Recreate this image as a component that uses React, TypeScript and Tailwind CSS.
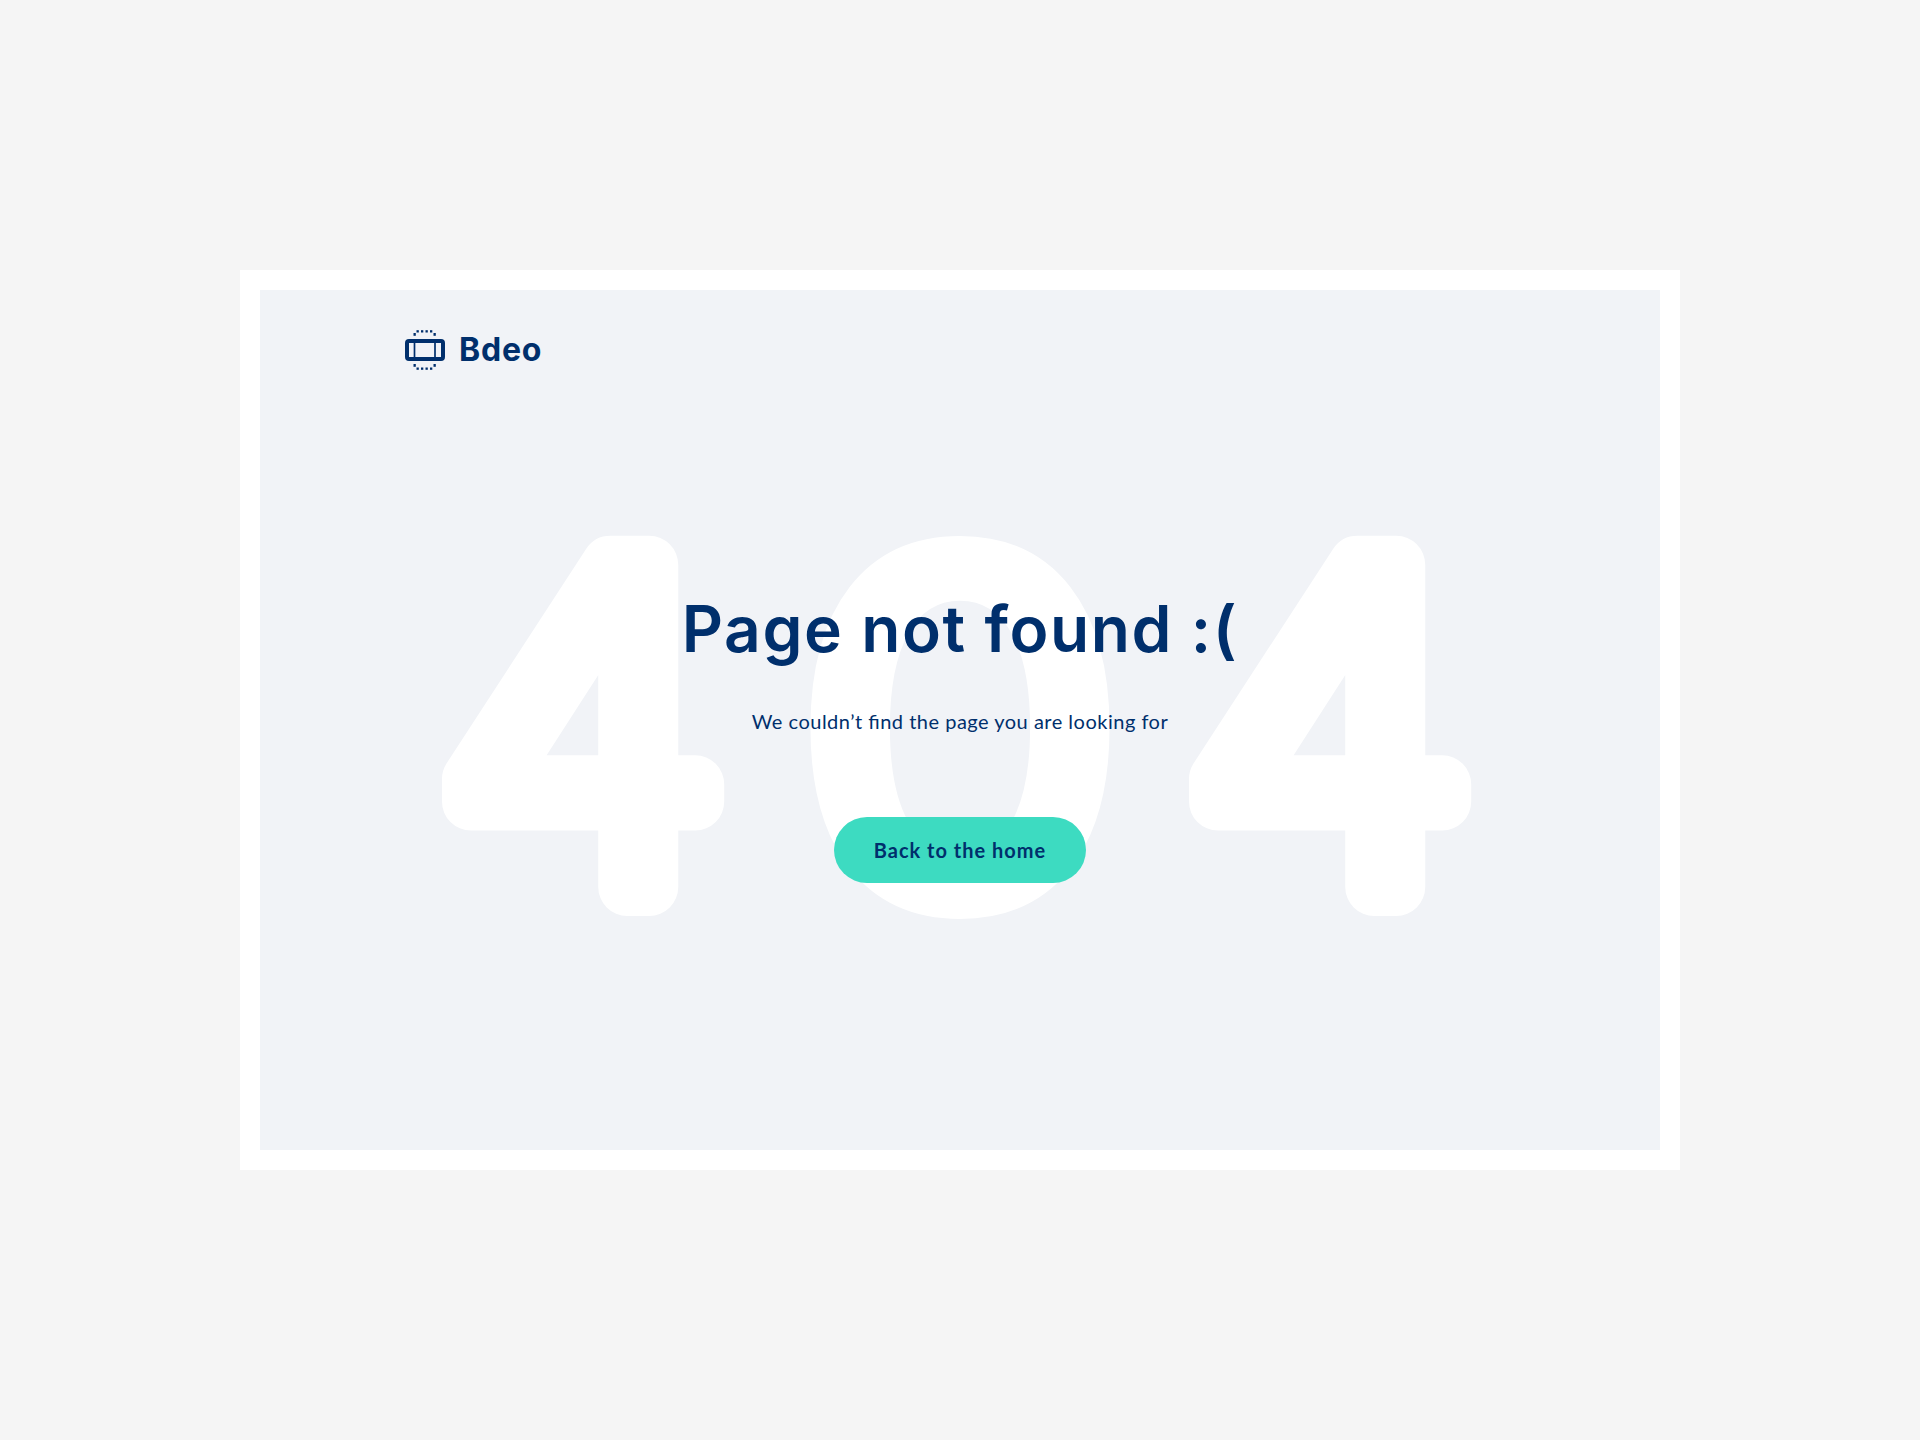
import React from "react";

const Logo = () => (
  <svg viewBox="0 0 40 40" className="h-10 w-10" fill="none" stroke="#002f6c" aria-hidden="true">
    <rect x="2" y="11" width="36" height="18" rx="2" strokeWidth="4" />
    <path d="M9.5 12v16M30 12v16" strokeWidth="1.7" />
    <g fill="#002f6c" stroke="none">
      {[11.5, 16, 20.5, 25].map((x) => (
        <React.Fragment key={x}>
          <rect x={x} y="0.2" width="2.3" height="2.3" />
          <rect x={x} y="37.5" width="2.3" height="2.3" />
        </React.Fragment>
      ))}
      <rect x="8.5" y="3" width="2.3" height="2.8" />
      <rect x="28.5" y="3" width="2.3" height="2.8" />
      <rect x="8.5" y="34" width="2.3" height="2.8" />
      <rect x="28.5" y="34" width="2.3" height="2.8" />
    </g>
  </svg>
);

export default function App() {
  return (
    <div className="flex min-h-screen items-center justify-center bg-[#f5f5f5] font-['Lato',sans-serif] text-[#002f6c]">
      <div className="grid aspect-[8/5] w-3/4 border-[20px] border-white bg-[#f1f3f7]">
        {/* Brand */}
        <header className="col-start-1 row-start-1 self-start px-[145px] pt-10">
          <a href="#" className="inline-flex items-center gap-3.5">
            <Logo />
            <span className="font-['Inter',sans-serif] text-[32px] font-bold leading-10 tracking-wide">
              Bdeo
            </span>
          </a>
        </header>

        {/* Backdrop number, the round stroke softens the corners of the fours */}
        <svg
          viewBox="0 0 1400 860"
          className="col-start-1 row-start-1 w-full self-center fill-white stroke-white"
          strokeLinejoin="round"
          textAnchor="middle"
          aria-hidden="true"
        >
          <text x="330" y="597" fontSize="442" strokeWidth="58" className="font-['DejaVu_Sans',sans-serif] font-extralight">
            4
          </text>
          <text x="700" y="623" fontSize="510" strokeWidth="2" className="font-['Inter',sans-serif] font-bold">
            0
          </text>
          <text x="1077" y="597" fontSize="442" strokeWidth="58" className="font-['DejaVu_Sans',sans-serif] font-extralight">
            4
          </text>
        </svg>

        {/* Message */}
        <main className="relative col-start-1 row-start-1 flex flex-col items-center self-center pt-9 text-center">
          <h1 className="font-['Inter',sans-serif] text-[64px] font-semibold leading-[72px] tracking-wide">
            Page not found :(
          </h1>
          <p className="mt-10 text-xl leading-8 tracking-wide [font-feature-settings:'liga']">
            We couldn’t find the page you are looking for
          </p>
          <a
            href="#"
            className="mt-20 rounded-full bg-[#3ddbc1] px-10 py-5 text-xl font-bold leading-[26px] tracking-wider hover:bg-[#2fcdb3]"
          >
            Back to the home
          </a>
        </main>
      </div>
    </div>
  );
}
